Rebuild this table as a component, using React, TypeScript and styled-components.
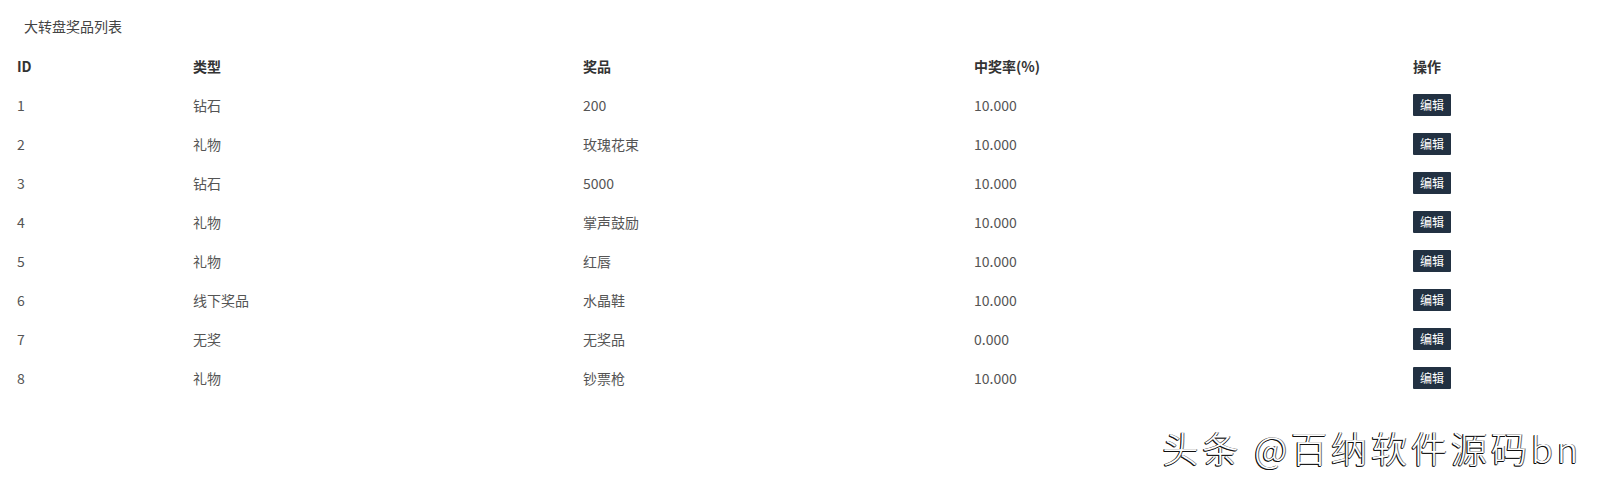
import React from "react";
import styled, { createGlobalStyle } from "styled-components";

const GlobalStyle = createGlobalStyle`
  html, body {
    margin: 0;
    padding: 0;
    background: #ffffff;
  }
  body {
    font-family: "Noto Sans CJK SC", "Noto Sans", "Liberation Sans", sans-serif;
    font-size: 14px;
    color: #555;
  }
`;

const Page = styled.div`
  position: relative;
  width: 1598px;
  height: 487px;
  overflow: hidden;
  background: #fff;
`;

const Title = styled.div`
  padding: 16px 0 0 24px;
  height: 30px;
  line-height: 20px;
  font-size: 14px;
  color: #444;
`;

const Table = styled.table`
  margin-left: 9px;
  width: 1580px;
  table-layout: fixed;
  border-collapse: collapse;
`;

const HeadCell = styled.th`
  height: 39px;
  padding: 0 8px;
  text-align: left;
  vertical-align: middle;
  font-weight: 700;
  font-size: 14px;
  color: #333;
`;

const Cell = styled.td`
  height: 39px;
  padding: 0 8px;
  vertical-align: middle;
  font-size: 14px;
  color: #555;
`;

const EditButton = styled.button`
  display: inline-flex;
  align-items: center;
  justify-content: center;
  height: 22px;
  padding: 0 7px;
  border: none;
  border-radius: 1px;
  background: #223142;
  color: #fff;
  font-family: "Noto Sans CJK SC", sans-serif;
  font-size: 12px;
  line-height: 22px;
  cursor: pointer;
`;

const Watermark = styled.div`
  position: absolute;
  right: 16px;
  top: 426px;
  font-family: "Noto Sans CJK SC", "Noto Sans", sans-serif;
  font-size: 36px;
  font-weight: 300;
  letter-spacing: 4px;
  line-height: 42px;
  color: #fff;
  white-space: nowrap;
  text-shadow: -1px 0 0 #111, 0 1px 0 #111, -1px 1px 0 #111, 1px 0 0 #777;
`;

const widths = [176, 390, 391, 439, 184];

const rows = [
  { id: 1, type: "钻石", prize: "200", rate: "10.000" },
  { id: 2, type: "礼物", prize: "玫瑰花束", rate: "10.000" },
  { id: 3, type: "钻石", prize: "5000", rate: "10.000" },
  { id: 4, type: "礼物", prize: "掌声鼓励", rate: "10.000" },
  { id: 5, type: "礼物", prize: "红唇", rate: "10.000" },
  { id: 6, type: "线下奖品", prize: "水晶鞋", rate: "10.000" },
  { id: 7, type: "无奖", prize: "无奖品", rate: "0.000" },
  { id: 8, type: "礼物", prize: "钞票枪", rate: "10.000" },
];

export default function App() {
  return (
    <Page>
      <GlobalStyle />
      <Title>大转盘奖品列表</Title>
      <Table>
        <colgroup>
          {widths.map((w, i) => (
            <col key={i} style={{ width: w }} />
          ))}
        </colgroup>
        <thead>
          <tr>
            <HeadCell>ID</HeadCell>
            <HeadCell>类型</HeadCell>
            <HeadCell>奖品</HeadCell>
            <HeadCell>中奖率(%)</HeadCell>
            <HeadCell>操作</HeadCell>
          </tr>
        </thead>
        <tbody>
          {rows.map((r) => (
            <tr key={r.id}>
              <Cell>{r.id}</Cell>
              <Cell>{r.type}</Cell>
              <Cell>{r.prize}</Cell>
              <Cell>{r.rate}</Cell>
              <Cell>
                <EditButton>编辑</EditButton>
              </Cell>
            </tr>
          ))}
        </tbody>
      </Table>
      <Watermark>头条 @百纳软件源码bn</Watermark>
    </Page>
  );
}
